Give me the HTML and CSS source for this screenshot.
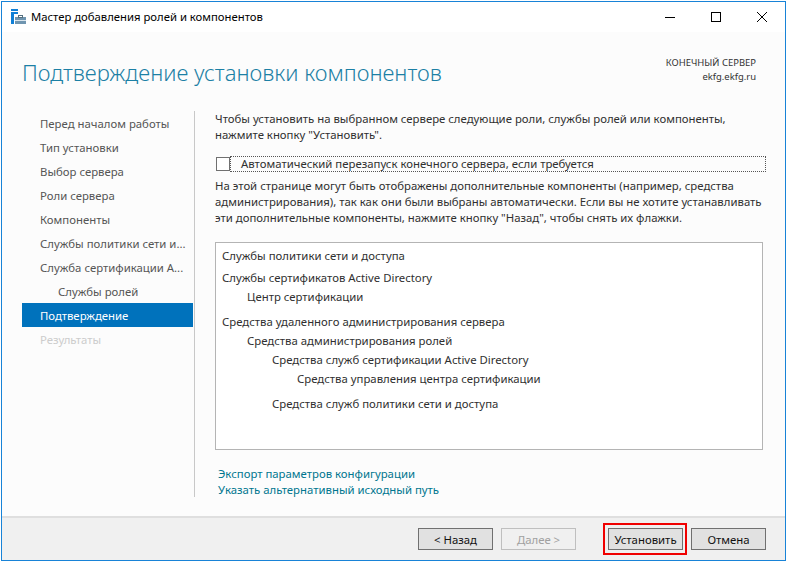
FILE: index.html
```html
<!DOCTYPE html>
<html lang="ru">
<head>
    <meta charset="UTF-8">
    <title>Мастер добавления ролей и компонентов</title>
    <link rel="stylesheet" href="styles.css">
</head>
<body>
    <div class="janela">
        <div class="barra-titulo">
            <svg class="icone-app" width="15" height="15" viewBox="0 0 15 15">
                <rect x="0" y="0" width="7" height="2" fill="#0f7fd6"/>
                <rect x="0" y="3" width="7" height="2" fill="#0f7fd6"/>
                <rect x="0" y="5" width="3" height="10" fill="#0f7fd6"/>
                <rect x="4" y="8" width="11" height="7" fill="#6f95b0"/>
                <rect x="4" y="11" width="11" height="1" fill="#dbe6ee"/>
                <rect x="7.5" y="6.5" width="4" height="2" fill="none" stroke="#55707f" stroke-width="1"/>
            </svg>
            <span class="nome-janela">Мастер добавления ролей и компонентов</span>
            <div class="controles">
                <svg width="46" height="30" viewBox="0 0 46 30"><path d="M18 15.5h10" stroke="#000" fill="none"/></svg>
                <svg width="46" height="30" viewBox="0 0 46 30"><rect x="18.5" y="10.5" width="9" height="9" stroke="#000" fill="none"/></svg>
                <svg width="46" height="30" viewBox="0 0 46 30"><path d="M18 10l10 10M28 10l-10 10" stroke="#000" fill="none"/></svg>
            </div>
        </div>

        <div class="conteudo">
            <div class="cabecalho">
                <h1 class="titulo">Подтверждение установки компонентов</h1>
                <div class="servidor">
                    <div>КОНЕЧНЫЙ СЕРВЕР</div>
                    <div>ekfg.ekfg.ru</div>
                </div>
            </div>

            <div class="corpo">
                <ul class="menu">
                    <li>Перед началом работы</li>
                    <li>Тип установки</li>
                    <li>Выбор сервера</li>
                    <li>Роли сервера</li>
                    <li>Компоненты</li>
                    <li>Службы политики сети и...</li>
                    <li>Служба сертификации А...</li>
                    <li class="sub">Службы ролей</li>
                    <li class="ativo">Подтверждение</li>
                    <li class="inativo">Результаты</li>
                </ul>

                <div class="painel">
                    <p class="texto">Чтобы установить на выбранном сервере следующие роли, службы ролей или компоненты,<br>нажмите кнопку "Установить".</p>
                    <div class="opcao">
                        <span class="caixa"></span>
                        <span class="rotulo">Автоматический перезапуск конечного сервера, если требуется</span>
                    </div>
                    <p class="texto">На этой странице могут быть отображены дополнительные компоненты (например, средства<br>администрирования), так как они были выбраны автоматически. Если вы не хотите устанавливать<br>эти дополнительные компоненты, нажмите кнопку "Назад", чтобы снять их флажки.</p>

                    <div class="lista">
                        <div class="n0 primeiro">Службы политики сети и доступа</div>
                        <div class="n0">Службы сертификатов Active Directory</div>
                        <div class="n1">Центр сертификации</div>
                        <div class="n0 grupo">Средства удаленного администрирования сервера</div>
                        <div class="n1">Средства администрирования ролей</div>
                        <div class="n2">Средства служб сертификации Active Directory</div>
                        <div class="n3">Средства управления центра сертификации</div>
                        <div class="n2 grupo">Средства служб политики сети и доступа</div>
                    </div>

                    <div class="links">
                        <a href="#">Экспорт параметров конфигурации</a>
                        <a href="#">Указать альтернативный исходный путь</a>
                    </div>
                </div>
            </div>
        </div>

        <div class="rodape">
            <button class="botao">&lt; Назад</button>
            <button class="botao desativado">Далее &gt;</button>
            <span class="destaque"><button class="botao">Установить</button></span>
            <button class="botao">Отмена</button>
        </div>
    </div>
</body>
</html>
```

FILE: styles.css
```css
:root {
    --cor-borda: #1883d7;
    --cor-azul: #0072bc;
    --cor-link: #00768f;
    --cor-texto: #303030;
    --font-principal: 'Noto Sans', 'Open Sans', sans-serif;
}

* {
    margin: 0;
    padding: 0;
    box-sizing: border-box;
}

body {
    width: 788px;
    height: 562px;
    padding: 1px 2px 1px 1px;
    background: #fff;
    font-family: var(--font-principal);
    font-size: 11.37px;
    color: var(--cor-texto);
    overflow: hidden;
}

.janela {
    display: flex;
    flex-direction: column;
    height: 560px;
    border: 1px solid var(--cor-borda);
    background: #fcfcfc;
}

/* --- Barra de titulo --- */
.barra-titulo {
    display: flex;
    align-items: center;
    flex: none;
    height: 30px;
    padding-left: 9px;
    background: #fff;
}

.icone-app {
    flex: none;
    margin-right: 5px;
    margin-bottom: 2px;
}

.nome-janela {
    flex: 1;
    padding-bottom: 2px;
    color: #000;
    font-size: 11.3px;
}

.controles {
    display: flex;
}

/* --- Cabecalho --- */
.conteudo {
    flex: 1;
    min-height: 0;
}

.cabecalho {
    display: flex;
    justify-content: space-between;
    height: 79px;
    padding: 24px 29px 0 20px;
}

.titulo {
    font-size: 22.08px;
    font-weight: 300;
    line-height: 32px;
    color: #1c80a5;
}

.servidor {
    font-size: 9.45px;
    line-height: 14px;
    text-align: right;
    color: #333;
}

/* --- Corpo --- */
.corpo {
    display: flex;
    height: 386px;
}

.menu {
    flex: none;
    width: 172px;
    margin-left: 20px;
    padding-right: 1px;
    list-style: none;
    color: #555;
}

.menu li {
    height: 24px;
    line-height: 26px;
    padding-left: 18px;
    white-space: nowrap;
}

.menu .sub {
    padding-left: 36px;
}

.menu .ativo {
    background: var(--cor-azul);
    color: #fff;
}

.menu .inativo {
    color: #ccc;
}

.painel {
    flex: 1;
    min-width: 0;
    border-left: 1px solid #c8c8c8;
    padding-left: 20px;
    padding-right: 19px;
}

.texto {
    line-height: 16px;
    white-space: nowrap;
}

.opcao {
    display: flex;
    align-items: center;
    height: 16px;
    margin: 13px 0 6px;
}

.caixa {
    flex: none;
    width: 14px;
    height: 14px;
    margin-left: 1px;
    border: 1px solid #707070;
    background: #fff;
}

.rotulo {
    flex: 1;
    height: 16px;
    line-height: 14px;
    padding-left: 10px;
    border: 1px dotted #555;
    white-space: nowrap;
}

.lista {
    height: 208px;
    margin-top: 16px;
    margin-right: 3px;
    padding-top: 3px;
    border: 1px solid #b4b4b4;
    background: #fff;
}

.lista div {
    height: 19px;
    line-height: 19px;
    white-space: nowrap;
}

.lista .n0 { padding-left: 6px; }
.lista .n1 { padding-left: 31px; }
.lista .n2 { padding-left: 56px; }
.lista .n3 { padding-left: 81px; }
.lista .primeiro { margin-bottom: 3px; }
.lista .grupo { margin-top: 6px; }

.links {
    display: flex;
    flex-direction: column;
    align-items: flex-start;
    margin-top: 16px;
    padding-left: 3px;
    line-height: 16px;
}

.links a {
    color: var(--cor-link);
    text-decoration: none;
}

/* --- Rodape --- */
.rodape {
    display: flex;
    align-items: center;
    justify-content: flex-end;
    flex: none;
    height: 44px;
    padding-right: 19px;
    border-top: 2px solid #dfdfdf;
    background: #f0f0f0;
}

.botao {
    width: 75px;
    height: 22px;
    margin-left: 8px;
    border: 1px solid #707070;
    background: #e1e1e1;
    font-family: var(--font-principal);
    font-size: 11.37px;
    color: #111;
}

.desativado {
    border-color: #bfbfbf;
    color: #a0a0a0;
    background: #f0f0f0;
}

.destaque {
    display: flex;
    margin-left: 27px;
    margin-right: -4px;
    padding: 3px 2px 3px 3px;
    border: 2px solid #f00000;
}

.destaque .botao {
    margin-left: 0;
}
```
